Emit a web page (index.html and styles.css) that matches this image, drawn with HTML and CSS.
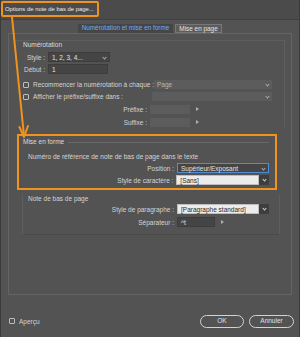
FILE: index.html
```html
<!DOCTYPE html>
<html lang="fr">
<head>
    <meta charset="UTF-8">
    <meta name="viewport" content="width=device-width, initial-scale=1.0">
    <title>Options de note de bas de page</title>
    <link rel="stylesheet" href="styles.css">
</head>
<body>
    <div class="window">
        <div class="titlebar">
            <span class="title">Options de note de bas de page...</span>
        </div>

        <div class="tabs">
            <span class="tab active">Numérotation et mise en forme</span>
            <span class="tab">Mise en page</span>
        </div>

        <div class="panel">
            <div class="group numbering">
                <div class="heading">Numérotation</div>
                <div class="row r-style">
                    <span class="lbl w-short">Style :</span>
                    <div class="field dark sel-style">1, 2, 3, 4...<span class="chev"></span></div>
                </div>
                <div class="row r-start">
                    <span class="lbl w-short">Début :</span>
                    <div class="field dark inp-start">1</div>
                </div>
                <div class="row r-check1">
                    <span class="box"></span>
                    <span class="check-text">Recommencer la numérotation à chaque :</span>
                    <div class="field off sel-wide">Page<span class="chev"></span></div>
                </div>
                <div class="row r-check2">
                    <span class="box"></span>
                    <span class="check-text">Afficher le préfixe/suffixe dans :</span>
                    <div class="field off sel-wide"><span class="chev"></span></div>
                </div>
                <div class="row r-prefix">
                    <span class="lbl w-prefix">Préfixe :</span>
                    <div class="field off inp-small"></div>
                    <span class="tri"></span>
                </div>
                <div class="row r-suffix">
                    <span class="lbl w-prefix">Suffixe :</span>
                    <div class="field off inp-small"></div>
                    <span class="tri"></span>
                </div>
            </div>

            <div class="group format">
                <div class="heading rule">Mise en forme</div>
                <div class="sub">Numéro de référence de note de bas de page dans le texte</div>
                <div class="row r-position">
                    <span class="lbl w-long">Position :</span>
                    <div class="field dark focus sel-pos">Supérieur/Exposant<span class="chev"></span></div>
                </div>
                <div class="row r-charstyle">
                    <span class="lbl w-long">Style de caractère :</span>
                    <div class="field light sel-char">[Sans]</div>
                    <span class="btn-chev"><span class="chev"></span></span>
                </div>
            </div>

            <div class="group note">
                <div class="sub">Note de bas de page</div>
                <div class="row r-para">
                    <span class="lbl w-long">Style de paragraphe :</span>
                    <div class="field light sel-para">[Paragraphe standard]</div>
                    <span class="btn-chev"><span class="chev"></span></span>
                </div>
                <div class="row r-sep">
                    <span class="lbl w-long">Séparateur :</span>
                    <div class="field dark inp-sep">^t</div>
                    <span class="tri"></span>
                </div>
            </div>
        </div>

        <div class="footer">
            <span class="box"></span>
            <span class="preview">Aperçu</span>
            <span class="spacer"></span>
            <span class="button">OK</span>
            <span class="button">Annuler</span>
        </div>
    </div>

    <!-- annotation arrow from the title to the highlighted group -->
    <svg class="arrow" width="40" height="145" viewBox="0 0 40 145">
        <path d="M12 17 L24 136" fill="none" stroke="#f0921e" stroke-width="2" stroke-linecap="round"/>
        <path d="M19.5 127 L24 137 L28 126" fill="none" stroke="#f0921e" stroke-width="2" stroke-linecap="round" stroke-linejoin="round"/>
    </svg>
</body>
</html>
```

FILE: styles.css
```css
body {
    margin: 0;
    padding: 0;
    width: 300px;
    height: 337px;
    overflow: hidden;
    background-color: #3a3a3a;
    font-family: "Liberation Sans", Arial, sans-serif;
    font-size: 6.5px;
    color: #d4d4d4;
    position: relative;
}

.window {
    box-sizing: border-box;
    width: 298px;
    height: 337px;
    margin-left: 1px;
    background-color: #535353;
    display: flex;
    flex-direction: column;
}

.titlebar {
    height: 20px;
    box-sizing: border-box;
    background-color: #4b4b4b;
    border-bottom: 1px solid #404040;
    padding: 1px 0 0 0;
}
.title {
    display: inline-block;
    box-sizing: border-box;
    height: 16px;
    line-height: 12px;
    padding: 0 3px 0 2px;
    border: 2px solid #f0921e;
    border-radius: 2px;
    color: #ececec;
    font-size: 5.9px;
}

.tabs {
    display: flex;
    height: 13px;
    padding-left: 77px;
    align-items: flex-end;
}
.tab {
    box-sizing: border-box;
    height: 9px;
    line-height: 8px;
    margin-right: 2px;
    white-space: nowrap;
    text-align: center;
    font-size: 6.4px;
}
.tab.active {
    width: 95px;
    background-color: #464646;
    color: #6fabec;
}
.tab:not(.active) {
    width: 47px;
    background-color: #5c5c5c;
    border: 1px solid #777;
    color: #e2e2e2;
}

.panel {
    box-sizing: border-box;
    height: 262px;
    margin-left: 7px;
    width: 284px;
    border: 1px solid #646464;
    display: flex;
    flex-direction: column;
}

.group {
    box-sizing: border-box;
    display: flex;
    flex-direction: column;
}
.numbering {
    margin: 6px 0 0 6px;
    width: 270px;
    padding-left: 8px;
    border-top: 1px solid #5e5e5e;
    border-right: 1px solid #5e5e5e;
}
.format {
    margin: 7px 0 0 8px;
    width: 260px;
    height: 56px;
    border: 2px solid #f0921e;
    padding: 2px 6px 0 4px;
}
.note {
    margin: 5px 0 0 13px;
    width: 258px;
    height: 40px;
    padding-left: 0;
    border-left: 1px solid #5e5e5e;
    border-bottom: 1px solid #4a4a4a;
    border-right: 1px solid #5e5e5e;
}

.heading {
    height: 8px;
    line-height: 8px;
    color: #dcdcdc;
}
.heading.rule {
    display: flex;
    align-items: center;
    gap: 4px;
}
.heading.rule::after {
    content: "";
    flex: 1;
    height: 1px;
    background-color: #686868;
}
.sub {
    height: 8px;
    line-height: 8px;
    padding-left: 5px;
    margin-top: 7px;
}
.note .sub {
    margin-top: 0;
}

.row {
    display: flex;
    align-items: center;
    height: 10px;
}
.r-style { margin-top: 3px; }
.r-start { margin-top: 2px; }
.r-check1 { margin-top: 6px; height: 9px; }
.r-check2 { margin-top: 3px; height: 9px; }
.r-prefix { margin-top: 3px; }
.r-suffix { margin-top: 3px; }
.r-position { margin-top: 2px; }
.r-charstyle { margin-top: 2px; }
.r-para { margin-top: 1px; }
.r-sep { margin-top: 3px; }

.lbl {
    text-align: right;
    padding-right: 3px;
    box-sizing: border-box;
    white-space: nowrap;
}
.w-short { width: 25px; }
.w-prefix { width: 127px; }
.w-long { width: 154px; }

.field {
    box-sizing: border-box;
    height: 10px;
    line-height: 9px;
    padding: 0 3px;
    position: relative;
    white-space: nowrap;
}
.field.dark {
    background-color: #454545;
    border: 1px solid #3d3d3d;
    color: #e4e4e4;
}
.field.focus {
    border-color: #4f8ed4;
}
.field.off {
    background-color: #5c5c5c;
    color: #b8b8b8;
    height: 9px;
    line-height: 9px;
}
.field.light {
    background-color: #ececec;
    border: 1px solid #bdbdbd;
    color: #2a2a2a;
}

.sel-style { width: 62px; }
.inp-start { width: 60px; }
.sel-wide { width: 120px; margin-left: auto; margin-right: 12px; }
.inp-small { width: 40px; height: 10px; background-color: #4d4d4d; }
.sel-pos { width: 92px; }
.sel-char { width: 83px; }
.sel-para { width: 82px; }
.inp-sep { width: 38px; }

.chev {
    position: absolute;
    right: 3px;
    top: 3px;
    width: 2px;
    height: 2px;
    border-right: 1px solid #a8a8a8;
    border-bottom: 1px solid #a8a8a8;
    transform: rotate(45deg);
}
.btn-chev {
    position: relative;
    width: 10px;
    height: 10px;
    background-color: #3e3e3e;
}
.btn-chev .chev {
    right: 3.5px;
    border-color: #d0d0d0;
}

.tri {
    width: 0;
    height: 0;
    margin-left: 6px;
    border-left: 3px solid #b0b0b0;
    border-top: 2px solid transparent;
    border-bottom: 2px solid transparent;
}

.box {
    box-sizing: border-box;
    width: 6px;
    height: 6px;
    border: 1px solid #bdbdbd;
    border-radius: 1px;
}
.check-text {
    margin-left: 4px;
    white-space: nowrap;
}

.footer {
    display: flex;
    align-items: center;
    height: 14px;
    margin-top: 19px;
    padding: 0 5px 0 8px;
}
.preview {
    margin-left: 4px;
}
.spacer {
    flex: 1;
}
.button {
    box-sizing: border-box;
    width: 44px;
    height: 13px;
    line-height: 10px;
    margin-left: 5px;
    text-align: center;
    border: 1.5px solid #d2d2d2;
    border-radius: 7px;
    color: #e0e0e0;
}
.button:last-child {
    width: 45px;
}

.arrow {
    position: absolute;
    left: 0;
    top: 0;
}
```
